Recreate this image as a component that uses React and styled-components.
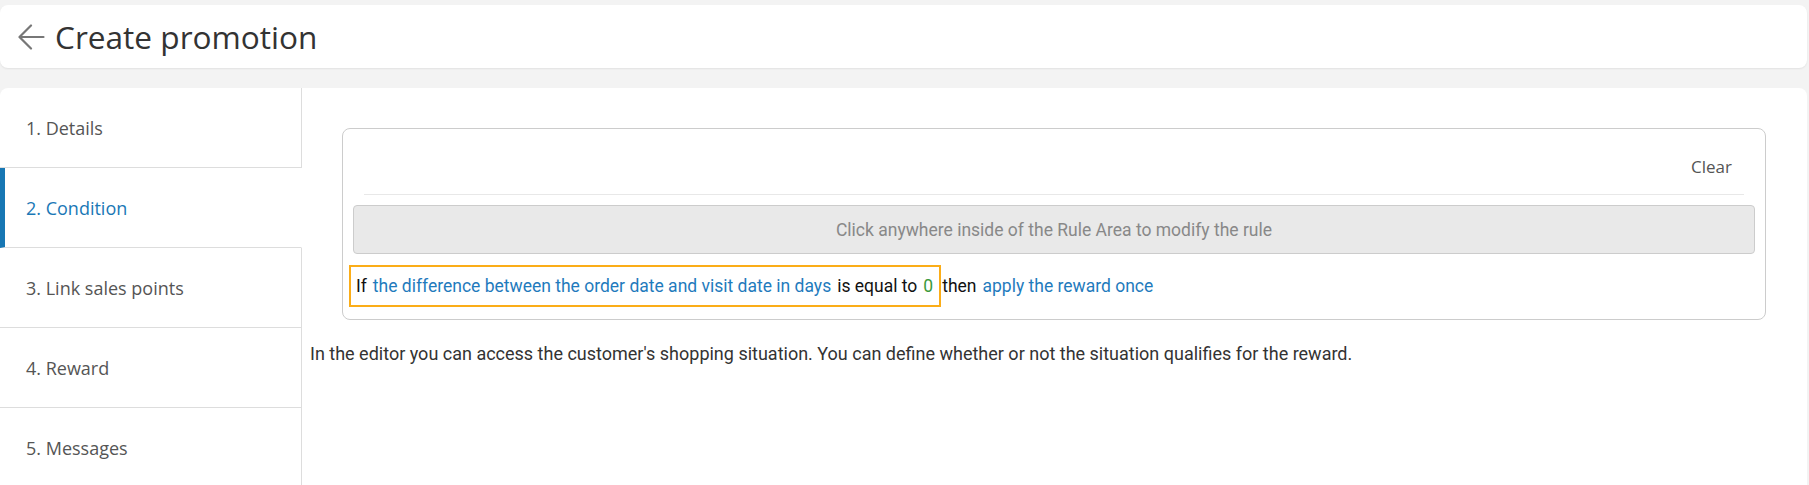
import React from 'react';
import styled, { createGlobalStyle } from 'styled-components';

const GlobalStyle = createGlobalStyle`
  html, body {
    margin: 0;
    background: #f3f3f3;
    font-family: Roboto, "Liberation Sans", sans-serif;
    overflow: hidden;
  }
`;

const steps = ['1. Details', '2. Condition', '3. Link sales points', '4. Reward', '5. Messages'];

const Page = styled.div`
  display: flex;
  flex-direction: column;
  gap: 20px;
  padding: 5px 2px 0 0;
`;

const Header = styled.header`
  height: 63px;
  display: flex;
  align-items: center;
  gap: 10px;
  padding-left: 18px;
  background: #fff;
  border-radius: 8px;
  box-shadow: 0 1px 2px rgba(0, 0, 0, 0.07);
`;

const Title = styled.h1`
  margin: 0;
  font-family: "Open Sans", sans-serif;
  font-size: 31.6px;
  font-weight: 400;
  color: #333;
`;

const Card = styled.main`
  display: flex;
  min-height: 430px;
  background: #fff;
  border-radius: 8px;
  overflow: hidden;
`;

const Sidebar = styled.nav`
  width: 302px;
  flex-shrink: 0;
  display: flex;
  flex-direction: column;
`;

const Step = styled.div`
  height: 79px;
  flex-shrink: 0;
  display: flex;
  align-items: center;
  padding-left: ${p => (p.$active ? '21px' : '26px')};
  border-bottom: 1px solid #ddd;
  border-left: ${p => (p.$active ? '5px solid #1777b4' : 'none')};
  border-right: ${p => (p.$active ? '1px solid transparent' : '1px solid #ddd')};
  font-family: "Open Sans", sans-serif;
  font-size: 18px;
  color: ${p => (p.$active ? '#1a78b6' : '#555')};
  &:nth-last-child(2) {
    border-bottom: none;
  }
`;

const SidebarFill = styled.div`
  flex: 1;
  border-right: 1px solid #ddd;
`;

const Content = styled.section`
  flex: 1;
  padding: 40px 41px 0 8px;
`;

const RuleBox = styled.div`
  margin-left: 32px;
  padding: 0 10px 12px;
  border: 1px solid #ccc;
  border-radius: 8px;
`;

const Toolbar = styled.div`
  display: flex;
  justify-content: flex-end;
  height: 65px;
  padding-right: 23px;
  box-sizing: border-box;
  padding-top: 28px;
`;

const ClearButton = styled.span`
  font-family: "Open Sans", sans-serif;
  font-size: 17px;
  line-height: 20px;
  color: #555;
  cursor: pointer;
`;

const Divider = styled.div`
  height: 1px;
  margin: 0 11px;
  background: #e8e8e8;
`;

const HintBar = styled.div`
  margin-top: 10px;
  height: 47px;
  display: flex;
  align-items: center;
  justify-content: center;
  background: #e9e9e9;
  border: 1px solid #ccc;
  border-radius: 4px;
  font-size: 17.5px;
  color: #888;
`;

const RuleLine = styled.div`
  margin: 11px 0 0 -4px;
  display: flex;
  align-items: center;
  gap: 6px;
  font-size: 17.5px;
  color: #111;
`;

const Highlight = styled.div`
  height: 38px;
  display: inline-flex;
  align-items: center;
  gap: 6px;
  padding: 0 6px 0 5px;
  border: 2px solid #fbad18;
`;

const Token = styled.span`
  color: ${p => (p.$kind === 'link' ? '#1f7bbd' : p.$kind === 'value' ? '#3b9a3b' : '#111')};
  cursor: ${p => (p.$kind ? 'pointer' : 'default')};
`;

const Note = styled.p`
  margin: 23px 0 0;
  font-size: 18px;
  line-height: 22px;
  color: #333;
`;

const BackArrow = () => (
  <svg width="27" height="26" viewBox="0 0 27 26" fill="none" stroke="#777" strokeWidth="2.2" strokeLinecap="round" strokeLinejoin="round">
    <path d="M25.5 13H2" />
    <path d="M13 1.5L1.5 13L13 24.5" />
  </svg>
);

export default function App() {
  return (
    <>
      <GlobalStyle />
      <Page>
        <Header>
          <BackArrow />
          <Title>Create promotion</Title>
        </Header>
        <Card>
          <Sidebar>
            {steps.map((s, i) => (
              <Step key={s} $active={i === 1}>{s}</Step>
            ))}
            <SidebarFill />
          </Sidebar>
          <Content>
            <RuleBox>
              <Toolbar>
                <ClearButton>Clear</ClearButton>
              </Toolbar>
              <Divider />
              <HintBar>Click anywhere inside of the Rule Area to modify the rule</HintBar>
              <RuleLine>
                <Highlight>
                  <Token>If</Token>
                  <Token $kind="link">the difference between the order date and visit date in days</Token>
                  <Token>is equal to</Token>
                  <Token $kind="value">0</Token>
                </Highlight>
                <Token style={{ marginLeft: -5 }}>then</Token>
                <Token $kind="link">apply the reward once</Token>
              </RuleLine>
            </RuleBox>
            <Note>
              In the editor you can access the customer's shopping situation. You can define whether or not the situation qualifies for the reward.
            </Note>
          </Content>
        </Card>
      </Page>
    </>
  );
}
